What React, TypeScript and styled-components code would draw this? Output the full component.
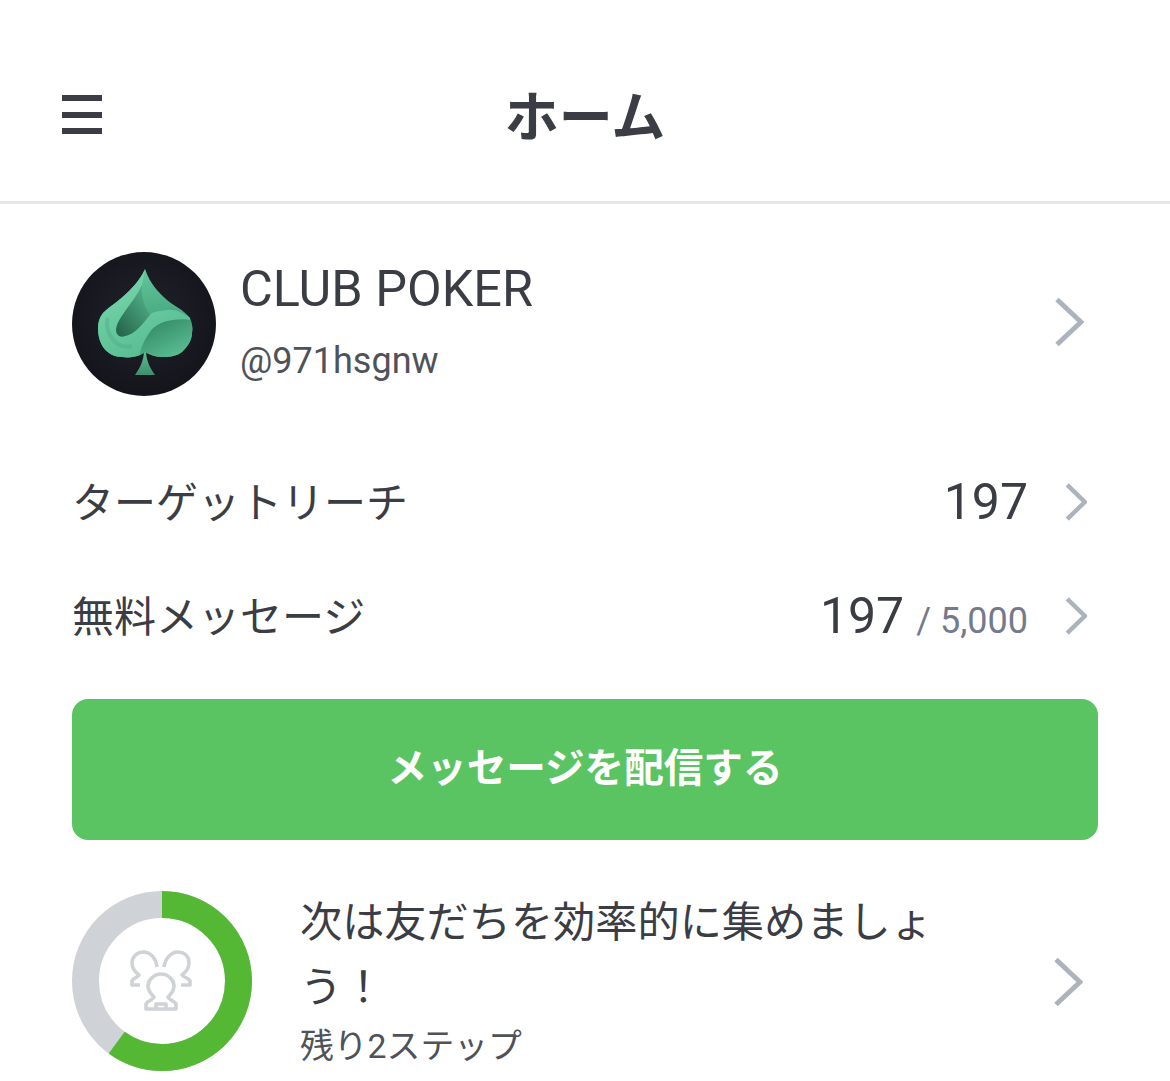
import styled, { createGlobalStyle } from "styled-components";

const GlobalStyle = createGlobalStyle`
  html, body {
    margin: 0;
    height: 1081px;
    overflow: hidden;
    background: #fff;
  }
  * {
    box-sizing: border-box;
  }
`;

const Page = styled.div`
  width: 1170px;
  height: 1081px;
  overflow: hidden;
  background: #fff;
  color: #3b3d45;
  font-family: Roboto, "Noto Sans CJK JP", sans-serif;
`;

const Header = styled.header`
  position: relative;
  display: flex;
  align-items: center;
  justify-content: center;
  height: 204px;
  padding-top: 36px;
  border-bottom: 3px solid #e5e6e8;
`;

const MenuButton = styled.div`
  position: absolute;
  left: 62px;
  top: 95px;
  width: 40px;
  height: 39px;
  display: flex;
  flex-direction: column;
  justify-content: space-between;

  span {
    display: block;
    height: 6px;
    background: #3b3d45;
  }
`;

const Title = styled.h1`
  margin: 0;
  font-size: 54px;
  font-weight: 700;
  line-height: 60px;
  color: #3b3d45;
`;

const Content = styled.main`
  padding: 48px 72px 0;
`;

const Profile = styled.section`
  display: flex;
  align-items: center;
  height: 144px;
  padding-right: 12px;
`;

const Avatar = styled.div`
  flex: none;
  width: 144px;
  height: 144px;
  border-radius: 50%;
  overflow: hidden;
`;

const ProfileText = styled.div`
  flex: 1;
  margin-left: 24px;
  margin-top: -6px;
`;

const Name = styled.div`
  font-size: 50.4px;
  line-height: 60px;
`;

const Handle = styled.div`
  margin-top: 20px;
  font-size: 36px;
  line-height: 44px;
  color: #4f5259;
`;

const ProfileChevron = styled.div`
  margin-top: -4px;
  margin-right: 2px;
`;

const StatList = styled.div`
  margin-top: 49px;
`;

const StatRow = styled.div`
  display: flex;
  align-items: center;
  justify-content: space-between;
  height: 114px;
  padding-right: 11px;
`;

const StatLabel = styled.span`
  margin-top: -5px;
  font-size: 42px;
  color: #3b3d45;
`;

const StatValue = styled.div`
  display: flex;
  align-items: baseline;
  gap: 12px;
  margin-left: auto;
  margin-right: 37px;
`;

const Count = styled.span`
  font-size: 50px;
  color: #3b3d45;
`;

const Limit = styled.span`
  font-size: 36px;
  color: #747a8c;
`;

const SendButton = styled.button`
  display: block;
  width: 1026px;
  height: 141px;
  margin-top: 26px;
  padding: 0 0 10px;
  border: none;
  border-radius: 16px;
  background: #5ac463;
  color: #fff;
  font-family: inherit;
  font-size: 39.6px;
  font-weight: 700;
`;

const Steps = styled.section`
  display: flex;
  align-items: flex-start;
  margin-top: 51px;
  padding-right: 13px;
`;

const Ring = styled.div`
  position: relative;
  flex: none;
  width: 180px;
  height: 180px;
`;

const RingIcon = styled.svg`
  position: absolute;
  left: 57px;
  top: 59px;
`;

const StepText = styled.div`
  flex: none;
  width: 640px;
  margin-left: 48px;
  margin-top: -1px;
`;

const StepTitle = styled.div`
  font-size: 42.2px;
  line-height: 65px;
  color: #3b3d45;
`;

const StepNote = styled.div`
  font-size: 33.8px;
  line-height: 44px;
  margin-top: 5px;
  color: #4f5259;
`;

const StepChevron = styled.div`
  margin-left: auto;
  margin-top: 66px;
  margin-right: 2px;
`;

function Chevron({ width, height, weight }: { width: number; height: number; weight: number }) {
  return (
    <svg width={width} height={height} viewBox="0 0 30 50" preserveAspectRatio="none" fill="none" style={{ display: "block" }}>
      <path d="M3 2.5 L27 25 L3 47.5" stroke="#adb3bd" strokeWidth={weight} vectorEffect="non-scaling-stroke" />
    </svg>
  );
}

const SPADE =
  "M73 17 C68 28 62 34 55 41 C47 49 38 54 31 61 C27 66 26 71 26 76 C26 84 28 90 31 95 C36 102 43 105 50 105 C57 106 63 105 68 103 C70 102 72 101 73 100 C78 103 84 105 91 105 C98 105 105 104 110 100 C116 94 120 88 120 81 C121 76 120 71 118 66 C112 58 102 54 95 48 C87 41 78 32 73 17 Z";

function SpadeLogo() {
  return (
    <svg width="144" height="144" viewBox="0 0 144 144" style={{ display: "block" }}>
      <defs>
        <radialGradient id="bg" cx="50%" cy="45%" r="60%">
          <stop offset="0" stopColor="#20222b" />
          <stop offset="1" stopColor="#13141a" />
        </radialGradient>
        <linearGradient id="body" x1="0.5" y1="0" x2="0.6" y2="0.6">
          <stop offset="0" stopColor="#64c59b" />
          <stop offset="1" stopColor="#45a880" />
        </linearGradient>
        <linearGradient id="leaf" x1="0.3" y1="0.1" x2="0.8" y2="1">
          <stop offset="0" stopColor="#74d3aa" />
          <stop offset="1" stopColor="#55b98e" />
        </linearGradient>
        <linearGradient id="pocket" x1="0" y1="1" x2="0.8" y2="0.1">
          <stop offset="0" stopColor="#225f47" />
          <stop offset="1" stopColor="#4fae85" />
        </linearGradient>
        <linearGradient id="bowl" x1="0.1" y1="0" x2="0.8" y2="1">
          <stop offset="0" stopColor="#2f8561" />
          <stop offset="1" stopColor="#5cc096" />
        </linearGradient>
        <linearGradient id="stem" x1="0" y1="0" x2="0" y2="1">
          <stop offset="0" stopColor="#5fc096" />
          <stop offset="1" stopColor="#3f8f6c" />
        </linearGradient>
      </defs>
      <rect width="144" height="144" fill="url(#bg)" />
      <path d="M72 98 C72 108 68 116 63 123 L83 123 C78 116 74 108 74 98 Z" fill="url(#stem)" />
      <path d={SPADE} fill="url(#body)" />
      <path
        d="M73 17 C68 28 62 34 55 41 C47 49 38 54 31 61 C27 66 26 71 26 76 C26 84 28 90 31 95 C36 102 43 105 50 105 C57 106 63 105 68 103 C69 95 73 87 78 80 C84 72 96 66 118 68 L118 66 C110 60 102 57 95 58 C86 59 80 60 78 63 C72 70 62 83 53 84 C48 85 45 82 45 78 C45 66 62 50 70 33 C71 27 72 22 73 17 Z"
        fill="url(#leaf)"
      />
      <path
        d="M46 83 C40 76 50 64 56 55 C62 48 67 40 70 33 C69 42 71 52 78 63 C72 70 63 83 53 84 C50 85 48 85 46 83 Z"
        fill="url(#pocket)"
      />
      <path d="M36 66 C33 74 37 86 46 92 C50 95 55 95 60 94" fill="none" stroke="#4aa981" strokeWidth="4" opacity="0.4" />
      <path
        d="M68 103 C69 95 73 87 78 80 C84 72 96 66 118 68 C120 72 121 76 120 81 C120 88 116 94 110 100 C105 104 98 105 91 105 C84 105 78 103 73 100 C72 101 70 102 68 103 Z"
        fill="url(#bowl)"
      />
    </svg>
  );
}

function ProgressRing() {
  const radius = 76.5;
  const length = 2 * Math.PI * radius;
  return (
    <svg width="180" height="180" viewBox="0 0 180 180" style={{ display: "block" }}>
      <circle cx="90" cy="90" r={radius} fill="none" stroke="#cfd2d7" strokeWidth="27" />
      <circle
        cx="90"
        cy="90"
        r={radius}
        fill="none"
        stroke="#55b834"
        strokeWidth="27"
        strokeDasharray={`${length * 0.6} ${length}`}
        transform="rotate(-90 90 90)"
      />
    </svg>
  );
}

function FriendsIcon() {
  return (
    <RingIcon width="64" height="64" viewBox="0 0 64 64" fill="none" stroke="#cfd2d6" strokeWidth="3.6" strokeLinejoin="round">
      <path d="M11 35 H3 V31 C3 29 9 27 10 25 C6 22 3 18 3 13 C3 6 9 2 15 2 C21 2 27 8 28 17" />
      <path d="M35 17 C36 8 43 2 48 2 C55 2 60 6 60 13 C60 18 57 22 53 25 C54 27 61 29 61 31 V35 H52" />
      <path d="M32 24 C25 24 19 30 19 36 C19 41 22 44 25 47 C24 50 17 52 17 54 V59 H47 V54 C47 52 40 50 39 47 C42 44 45 41 45 36 C45 30 39 24 32 24 Z" />
      <path d="M27 59 V54 H37 V59" />
    </RingIcon>
  );
}

export default function App() {
  return (
    <Page>
      <GlobalStyle />
      <Header>
        <MenuButton>
          <span />
          <span />
          <span />
        </MenuButton>
        <Title>ホーム</Title>
      </Header>
      <Content>
        <Profile>
          <Avatar>
            <SpadeLogo />
          </Avatar>
          <ProfileText>
            <Name>CLUB POKER</Name>
            <Handle>@971hsgnw</Handle>
          </ProfileText>
          <ProfileChevron>
            <Chevron width={30} height={50} weight={5} />
          </ProfileChevron>
        </Profile>
        <StatList>
          <StatRow>
            <StatLabel>ターゲットリーチ</StatLabel>
            <StatValue>
              <Count>197</Count>
            </StatValue>
            <Chevron width={22} height={38} weight={4.4} />
          </StatRow>
          <StatRow>
            <StatLabel>無料メッセージ</StatLabel>
            <StatValue>
              <Count>197</Count>
              <Limit>/ 5,000</Limit>
            </StatValue>
            <Chevron width={22} height={38} weight={4.4} />
          </StatRow>
        </StatList>
        <SendButton>メッセージを配信する</SendButton>
        <Steps>
          <Ring>
            <ProgressRing />
            <FriendsIcon />
          </Ring>
          <StepText>
            <StepTitle>次は友だちを効率的に集めましょう！</StepTitle>
            <StepNote>残り2ステップ</StepNote>
          </StepText>
          <StepChevron>
            <Chevron width={30} height={50} weight={5} />
          </StepChevron>
        </Steps>
      </Content>
    </Page>
  );
}
